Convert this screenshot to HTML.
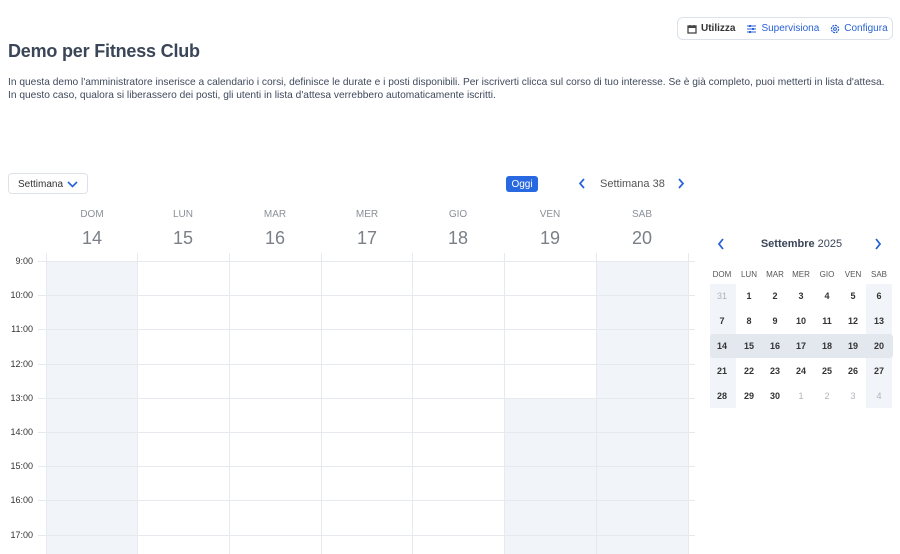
<!DOCTYPE html>
<html><head><meta charset="utf-8"><style>
*{margin:0;padding:0;box-sizing:border-box}
body{width:900px;height:554px;overflow:hidden;background:#fff;font-family:"Liberation Sans",Arial,sans-serif;color:#3f4a5c;position:relative}
.a{position:absolute}
.nav{left:677px;top:17px;width:216px;height:23px;border:1px solid #dde2ea;border-radius:6px;font-size:10px;display:flex;align-items:center;padding-left:9px;gap:0}
.nav span{display:flex;align-items:center;gap:4px;margin-right:11px}
h1{position:absolute;left:8px;top:41px;font-size:18px;font-weight:700;color:#3a4558;letter-spacing:-0.2px}
.p{left:8px;top:77px;font-size:10.2px;line-height:12.5px;color:#3f4a5c;width:892px;white-space:nowrap}
.sel{left:8px;top:173px;width:80px;height:21px;border:1px solid #dde2ea;border-radius:4px;font-size:10px;padding:5px 0 0 9px;color:#333}
.dh{top:209px;width:92px;text-align:center;font-size:10px;color:#8a8f98}
.dn{top:228px;width:92px;text-align:center;font-size:18px;color:#7a7f88}
.hl{height:1px;background:#e6e9ed;left:38px;width:657px}
.vl{width:1px;background:#e6e9ed;top:253px;height:301px}
.hr{left:8px;width:25px;text-align:right;font-size:9px;color:#333}
.sh{background:#f1f4f8}
.mc{width:26px;text-align:center;font-size:9px;font-weight:700;color:#333}
.mh{width:26px;text-align:center;font-size:8px;color:#555}
</style></head><body>
<div class="a nav">
<span style="font-weight:700;color:#333"><svg width="10" height="10" viewBox="0 0 10 10"><rect x="1" y="2" width="8" height="7" fill="none" stroke="#444" stroke-width="1.3"/><rect x="1" y="2" width="8" height="2" fill="#444"/><path d="M3 1v2M7 1v2" stroke="#444" stroke-width="1.2"/></svg>Utilizza</span>
<span style="color:#2862d8"><svg width="11" height="10" viewBox="0 0 11 10"><path d="M1 2h9M1 5h9M1 8h9" stroke="#2862d8" stroke-width="1.1"/><rect x="3" y="1" width="2" height="2" fill="#2862d8"/><rect x="6" y="4" width="2" height="2" fill="#2862d8"/><rect x="3" y="7" width="2" height="2" fill="#2862d8"/></svg>Supervisiona</span>
<span style="color:#2862d8"><svg width="10" height="10" viewBox="0 0 10 10"><circle cx="5" cy="5" r="3.6" fill="none" stroke="#2862d8" stroke-width="1.2" stroke-dasharray="2 0.8"/><circle cx="5" cy="5" r="1.4" fill="none" stroke="#2862d8" stroke-width="1"/></svg>Configura</span>
</div>
<h1>Demo per Fitness Club</h1>
<div class="a p">In questa demo l'amministratore inserisce a calendario i corsi, definisce le durate e i posti disponibili. Per iscriverti clicca sul corso di tuo interesse. Se è già completo, puoi metterti in lista d'attesa.<br>In questo caso, qualora si liberassero dei posti, gli utenti in lista d'attesa verrebbero automaticamente iscritti.</div>
<div class="a sel">Settimana<svg class="a" style="left:58px;top:7px" width="11" height="7" viewBox="0 0 11 7"><path d="M1 1l4.5 4.5L10 1" fill="none" stroke="#2862d8" stroke-width="1.6"/></svg></div>
<div class="a" style="left:506px;top:176px;width:32px;height:16px;background:#2868e0;border-radius:3px;color:#fff;font-size:10px;text-align:center;line-height:17px">Oggi</div>
<svg class="a" style="left:578px;top:178px" width="8" height="11" viewBox="0 0 8 11"><path d="M6 1L2 5.5 6 10" fill="none" stroke="#2862d8" stroke-width="1.7"/></svg>
<div class="a" style="left:600px;top:178px;font-size:11px;color:#555">Settimana 38</div>
<svg class="a" style="left:677px;top:178px" width="8" height="11" viewBox="0 0 8 11"><path d="M2 1l4 4.5L2 10" fill="none" stroke="#2862d8" stroke-width="1.7"/></svg>

<div class="a dh" style="left:46px">DOM</div><div class="a dn" style="left:46px">14</div>
<div class="a dh" style="left:137px">LUN</div><div class="a dn" style="left:137px">15</div>
<div class="a dh" style="left:229px">MAR</div><div class="a dn" style="left:229px">16</div>
<div class="a dh" style="left:321px">MER</div><div class="a dn" style="left:321px">17</div>
<div class="a dh" style="left:412px">GIO</div><div class="a dn" style="left:412px">18</div>
<div class="a dh" style="left:504px">VEN</div><div class="a dn" style="left:504px">19</div>
<div class="a dh" style="left:596px">SAB</div><div class="a dn" style="left:596px">20</div>

<div class="a sh" style="left:46px;top:261px;width:91px;height:293px"></div>
<div class="a sh" style="left:596px;top:261px;width:92px;height:293px"></div>
<div class="a sh" style="left:504px;top:398px;width:92px;height:156px"></div>

<div class="a vl" style="left:46px"></div><div class="a vl" style="left:137px"></div><div class="a vl" style="left:229px"></div><div class="a vl" style="left:321px"></div><div class="a vl" style="left:412px"></div><div class="a vl" style="left:504px"></div><div class="a vl" style="left:596px"></div><div class="a vl" style="left:688px"></div>

<div class="a hl" style="top:261px"></div><div class="a hl" style="top:295px"></div><div class="a hl" style="top:329px"></div><div class="a hl" style="top:364px"></div><div class="a hl" style="top:398px"></div><div class="a hl" style="top:432px"></div><div class="a hl" style="top:466px"></div><div class="a hl" style="top:500px"></div><div class="a hl" style="top:535px"></div>
<div class="a hr" style="top:256px">9:00</div><div class="a hr" style="top:290px">10:00</div><div class="a hr" style="top:324px">11:00</div><div class="a hr" style="top:359px">12:00</div><div class="a hr" style="top:393px">13:00</div><div class="a hr" style="top:427px">14:00</div><div class="a hr" style="top:461px">15:00</div><div class="a hr" style="top:495px">16:00</div><div class="a hr" style="top:530px">17:00</div>

<svg class="a" style="left:717px;top:238px" width="8" height="12" viewBox="0 0 8 12"><path d="M6 1L2 6l4 5" fill="none" stroke="#2862d8" stroke-width="1.8"/></svg>
<div class="a" style="left:710px;top:238px;width:183px;text-align:center;font-size:11px;color:#3a4558"><b>Settembre</b> 2025</div>
<svg class="a" style="left:874px;top:238px" width="8" height="12" viewBox="0 0 8 12"><path d="M2 1l4 5-4 5" fill="none" stroke="#2862d8" stroke-width="1.8"/></svg>

<div class="a sh" style="left:710px;top:284px;width:26px;height:124px"></div>
<div class="a sh" style="left:866px;top:284px;width:26px;height:124px"></div>
<div class="a" style="left:710px;top:334px;width:183px;height:24px;background:#e3e8ef;border-radius:3px"></div>

<div id="mc"></div>
<script>
var x=[709,736,762,788,814,840,866],h=["DOM","LUN","MAR","MER","GIO","VEN","SAB"],s="";
for(var i=0;i<7;i++)s+='<div class="a mh" style="left:'+x[i]+'px;top:270px">'+h[i]+'</div>';
var d=[31,1,2,3,4,5,6,7,8,9,10,11,12,13,14,15,16,17,18,19,20,21,22,23,24,25,26,27,28,29,30,1,2,3,4];
for(var k=0;k<35;k++){var r=Math.floor(k/7),c=k%7,g=(k==0||k>30);
s+='<div class="a mc" style="left:'+x[c]+'px;top:'+(291+r*25)+'px;'+(g?'color:#b0b4ba;font-weight:400':'')+'">'+d[k]+'</div>';}
document.getElementById("mc").innerHTML=s;
</script>
</body></html>
